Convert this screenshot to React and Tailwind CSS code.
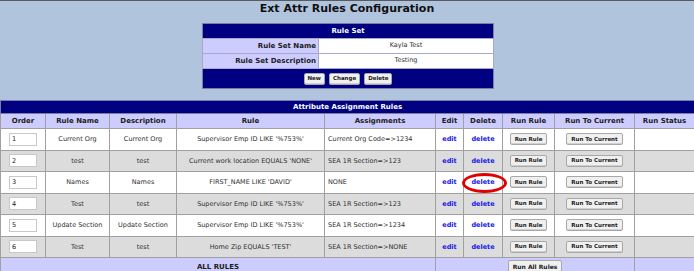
import * as React from 'react';

const rules = [
  { order: '1', name: 'Current Org', desc: 'Current Org', rule: "Supervisor Emp ID LIKE '%753%'", assign: 'Current Org Code=>1234' },
  { order: '2', name: 'test', desc: 'test', rule: "Current work location EQUALS 'NONE'", assign: 'SEA 1R Section=>123' },
  { order: '3', name: 'Names', desc: 'Names', rule: "FIRST_NAME LIKE 'DAVID'", assign: 'NONE', circled: true },
  { order: '4', name: 'Test', desc: 'test', rule: "Supervisor Emp ID LIKE '%753%'", assign: 'SEA 1R Section=>123' },
  { order: '5', name: 'Update Section', desc: 'Update Section', rule: "Supervisor Emp ID LIKE '%753%'", assign: 'SEA 1R Section=>1234' },
  { order: '6', name: 'Test', desc: 'test', rule: "Home Zip EQUALS 'TEST'", assign: 'SEA 1R Section=>NONE' },
];

function SmallButton({ children, className = '' }) {
  return (
    <button
      type="button"
      className={`align-middle h-[12px] bg-[#f0f0f0] border border-[#a8a8a8] rounded-[2px] text-[5.5px] font-bold leading-none text-[#202020] shadow-[inset_0_-1px_0_#d0d0d0] ${className}`}
    >
      {children}
    </button>
  );
}

function RuleSetTable() {
  return (
    <table className="ml-[202px] w-[291px] table-fixed border-collapse border border-[#7c7ca8]">
      <colgroup>
        <col className="w-[116px]" />
        <col className="w-[175px]" />
      </colgroup>
      <tbody>
        <tr className="h-[15px] bg-[#000080]">
          <td colSpan={2} className="text-center text-white font-bold text-[7px]">
            Rule Set
          </td>
        </tr>
        <tr className="h-[15px]">
          <td className="bg-[#ccccff] border border-[#a8a8c8] text-right pr-[2px] font-bold text-[7px] text-[#202020]">
            Rule Set Name
          </td>
          <td className="bg-white border border-[#a8a8c8] text-center text-[6.5px] text-[#303030]">
            Kayla Test
          </td>
        </tr>
        <tr className="h-[15px]">
          <td className="bg-[#ccccff] border border-[#a8a8c8] text-right pr-[2px] font-bold text-[7px] text-[#202020]">
            Rule Set Description
          </td>
          <td className="bg-white border border-[#a8a8c8] text-center text-[6.5px] text-[#303030]">
            Testing
          </td>
        </tr>
        <tr className="h-[20px] bg-[#000080]">
          <td colSpan={2}>
            <div className="flex justify-center gap-[4px]">
              <SmallButton className="px-[3px]">New</SmallButton>
              <SmallButton className="px-[3px]">Change</SmallButton>
              <SmallButton className="px-[3px]">Delete</SmallButton>
            </div>
          </td>
        </tr>
      </tbody>
    </table>
  );
}

function RulesTable() {
  const th = 'bg-[#ccccff] border border-[#a0a0a0] text-center font-bold text-[7px] text-[#202020]';
  const cell = 'border border-[#a0a0a0] text-center text-[6.5px] leading-[8px]';
  const td = `${cell} text-[#303030]`;
  const link = `${cell} font-bold text-[#1818e8]`;
  return (
    <table className="w-[694px] table-fixed border-collapse">
      <colgroup>
        <col className="w-[45px]" />
        <col className="w-[64px]" />
        <col className="w-[67px]" />
        <col className="w-[148px]" />
        <col className="w-[111px]" />
        <col className="w-[28px]" />
        <col className="w-[39px]" />
        <col className="w-[52px]" />
        <col className="w-[80px]" />
        <col className="w-[60px]" />
      </colgroup>
      <tbody>
        <tr className="h-[13px] bg-[#000080]">
          <td colSpan={10} className="text-center text-white font-bold text-[7px] border border-[#7c7ca8]">
            Attribute Assignment Rules
          </td>
        </tr>
        <tr className="h-[15px]">
          <td className={th}>Order</td>
          <td className={th}>Rule Name</td>
          <td className={th}>Description</td>
          <td className={th}>Rule</td>
          <td className={th}>Assignments</td>
          <td className={th}>Edit</td>
          <td className={th}>Delete</td>
          <td className={th}>Run Rule</td>
          <td className={th}>Run To Current</td>
          <td className={th}>Run Status</td>
        </tr>
        {rules.map((r, idx) => (
          <tr key={r.order} className={`h-[21.5px] ${idx % 2 === 1 ? 'bg-[#dcdcdc]' : 'bg-white'}`}>
            <td className={`${cell} text-left pl-[8px]`}>
              <input
                readOnly
                value={r.order}
                className="block w-[28px] h-[13px] bg-white border border-[#c8c8c8] text-[6.5px] pl-[2px] text-[#202020]"
              />
            </td>
            <td className={td}>{r.name}</td>
            <td className={td}>{r.desc}</td>
            <td className={td}>{r.rule}</td>
            <td className={`${td} text-left pl-[3px]`}>{r.assign}</td>
            <td className={link}>edit</td>
            <td className={`${link} relative`}>
              delete
              {r.circled && (
                <span className="absolute left-[-2px] top-[1px] w-[45px] h-[20px] rounded-[50%] border-[3px] border-[#e00000]" />
              )}
            </td>
            <td className={cell}>
              <SmallButton className="px-[4px]">Run Rule</SmallButton>
            </td>
            <td className={cell}>
              <SmallButton className="px-[4px]">Run To Current</SmallButton>
            </td>
            <td className={cell}></td>
          </tr>
        ))}
        <tr className="h-[18px] bg-[#ccccff]">
          <td colSpan={5} className="border border-[#a0a0a0] text-center font-bold text-[7px] leading-[8px] text-[#202020]">
            ALL RULES
          </td>
          <td colSpan={4} className={cell}>
            <SmallButton className="h-[13px] px-[4px] text-[6px]">Run All Rules</SmallButton>
          </td>
          <td className={cell}></td>
        </tr>
      </tbody>
    </table>
  );
}

export default function App() {
  return (
    <div
      className="w-[694px] h-[271px] overflow-hidden bg-[#b0c4de] border-t border-[#5a5a5a]"
      style={{ fontFamily: '"DejaVu Sans", Verdana, sans-serif' }}
    >
      <h1 className="h-[22px] pt-[1px] text-center font-bold text-[11px] text-[#101010] leading-[13px]">
        Ext Attr Rules Configuration
      </h1>
      <RuleSetTable />
      <div className="h-[11px]" />
      <RulesTable />
    </div>
  );
}
